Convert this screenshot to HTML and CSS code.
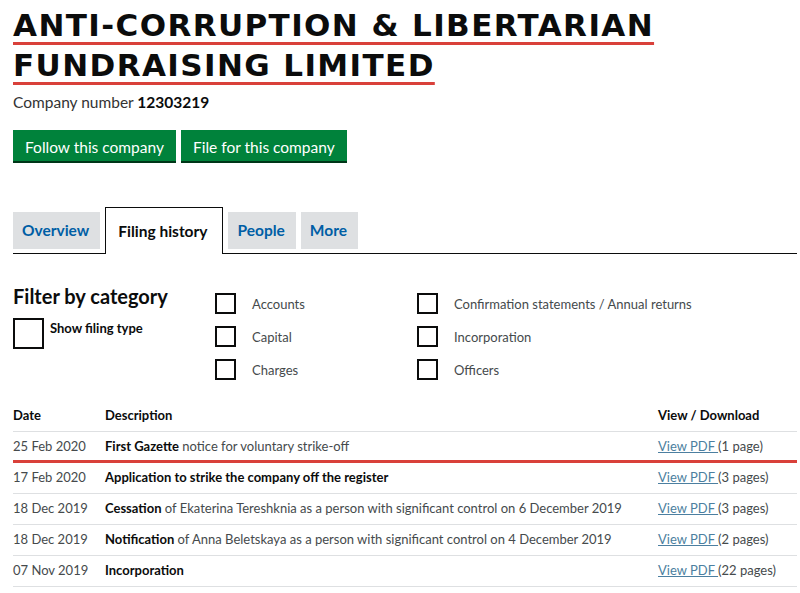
FILE: index.html
```html
<!DOCTYPE html>
<html lang="en">
<head>
    <meta charset="UTF-8">
    <title>ANTI-CORRUPTION &amp; LIBERTARIAN FUNDRAISING LIMITED - Filing history</title>
    <link rel="stylesheet" href="styles.css">
</head>
<body>
    <div class="page">
        <h1 class="company-name">
            <span class="heading-line">ANTI-CORRUPTION &amp; LIBERTARIAN</span><br>
            <span class="heading-line">FUNDRAISING LIMITED</span>
        </h1>
        <p class="company-number">Company number <strong>12303219</strong></p>

        <div class="actions">
            <a class="button" href="#">Follow this company</a>
            <a class="button" href="#">File for this company</a>
        </div>

        <ul class="tabs">
            <li class="tab"><a href="#">Overview</a></li>
            <li class="tab active"><a href="#">Filing history</a></li>
            <li class="tab"><a href="#">People</a></li>
            <li class="tab"><a href="#">More</a></li>
        </ul>

        <div class="filters">
            <div class="filter-title">
                <h2>Filter by category</h2>
                <label class="show-type"><span class="box big"></span><span>Show filing type</span></label>
            </div>
            <div class="filter-col">
                <label class="check"><span class="box"></span>Accounts</label>
                <label class="check"><span class="box"></span>Capital</label>
                <label class="check"><span class="box"></span>Charges</label>
            </div>
            <div class="filter-col wide">
                <label class="check"><span class="box"></span>Confirmation statements / Annual returns</label>
                <label class="check"><span class="box"></span>Incorporation</label>
                <label class="check"><span class="box"></span>Officers</label>
            </div>
        </div>

        <table class="filings">
            <thead>
                <tr>
                    <th class="col-date">Date</th>
                    <th>Description</th>
                    <th class="col-view">View / Download</th>
                </tr>
            </thead>
            <tbody>
                <tr class="marked">
                    <td>25 Feb 2020</td>
                    <td><b>First Gazette</b> notice for voluntary strike-off</td>
                    <td><a href="#">View PDF </a>(1 page)</td>
                </tr>
                <tr>
                    <td>17 Feb 2020</td>
                    <td><b>Application to strike the company off the register</b></td>
                    <td><a href="#">View PDF </a>(3 pages)</td>
                </tr>
                <tr>
                    <td>18 Dec 2019</td>
                    <td><b>Cessation</b> of Ekaterina Tereshknia as a person with significant control on 6 December 2019</td>
                    <td><a href="#">View PDF </a>(3 pages)</td>
                </tr>
                <tr>
                    <td>18 Dec 2019</td>
                    <td><b>Notification</b> of Anna Beletskaya as a person with significant control on 4 December 2019</td>
                    <td><a href="#">View PDF </a>(2 pages)</td>
                </tr>
                <tr>
                    <td>07 Nov 2019</td>
                    <td><b>Incorporation</b></td>
                    <td><a href="#">View PDF </a>(22 pages)</td>
                </tr>
            </tbody>
        </table>
    </div>
</body>
</html>
```

FILE: styles.css
```css
body {
    margin: 0;
    font-family: Lato, "Liberation Sans", sans-serif;
    color: #0b0c0c;
    background: #fff;
}
.page {
    padding: 5px 3px 0 13px;
}
.company-name {
    margin: 0;
    font-family: "DejaVu Sans", "Open Sans", sans-serif;
    font-size: 31px;
    line-height: 40px;
    font-weight: 700;
    letter-spacing: 1.4px;
}
.heading-line {
    text-decoration: underline;
    text-decoration-color: #d9403a;
    text-decoration-thickness: 3px;
    text-underline-offset: 6px;
}
.company-number {
    margin: 7px 0 0;
    font-size: 15.5px;
    line-height: 20px;
    color: #333;
}
.company-number strong {
    color: #0b0c0c;
}
.actions {
    display: flex;
    gap: 5px;
    margin-top: 18px;
}
.button {
    display: block;
    height: 29px;
    padding: 2px 12px 0;
    line-height: 30px;
    background: #00823b;
    box-shadow: 0 2px 0 #003618;
    color: #fff;
    font-size: 15.5px;
    text-decoration: none;
}
.tabs {
    display: flex;
    align-items: flex-end;
    gap: 5px;
    list-style: none;
    margin: 46px 0 0;
    padding: 0;
    border-bottom: 1px solid #0b0c0c;
}
.tab a {
    display: block;
    height: 37px;
    line-height: 37px;
    margin-bottom: 4px;
    padding: 0 11px 0 9px;
    background: #dee0e2;
    color: #005ea5;
    font-size: 15.5px;
    font-weight: 700;
    text-decoration: none;
}
.tab.active a {
    height: 46px;
    line-height: 46px;
    margin-bottom: -1px;
    padding: 0 15px 0 12px;
    background: #fff;
    color: #0b0c0c;
    border: 1px solid #0b0c0c;
    border-bottom: none;
}
.filters {
    display: flex;
    margin-top: 30px;
}
.filter-title {
    width: 202px;
}
.filter-title h2 {
    margin: 0;
    font-size: 20px;
    line-height: 24px;
    font-weight: 700;
}
.show-type {
    display: flex;
    align-items: flex-start;
    gap: 6px;
    margin-top: 10px;
    font-size: 13px;
    line-height: 16px;
    font-weight: 700;
}
.show-type span:last-child {
    padding-top: 2px;
}
.box {
    flex: none;
    box-sizing: border-box;
    width: 21px;
    height: 21px;
    border: 2px solid #0b0c0c;
    background: #fff;
}
.box.big {
    width: 31px;
    height: 31px;
}
.filter-col {
    display: flex;
    flex-direction: column;
    gap: 12px;
    width: 202px;
    padding-top: 9px;
}
.filter-col.wide {
    flex: 1;
}
.check {
    display: flex;
    align-items: center;
    gap: 16px;
    font-size: 13px;
    color: #454a4c;
}
.filings {
    width: 100%;
    border-collapse: collapse;
    margin-top: 21px;
    font-size: 13px;
    line-height: 16px;
}
.filings th {
    text-align: left;
    padding: 6px 0 8px;
    font-weight: 700;
    border-bottom: 1px solid #dee0e2;
}
.filings td {
    padding: 6px 0 8px;
    border-bottom: 1px solid #dee0e2;
    color: #454a4c;
}
.filings td b {
    color: #0b0c0c;
}
.col-date {
    width: 92px;
}
.col-view {
    width: 139px;
}
.filings a {
    color: #4c7fa0;
}
.filings tr.marked td {
    padding-bottom: 6px;
    border-bottom: 3px solid #d9403a;
}
```
